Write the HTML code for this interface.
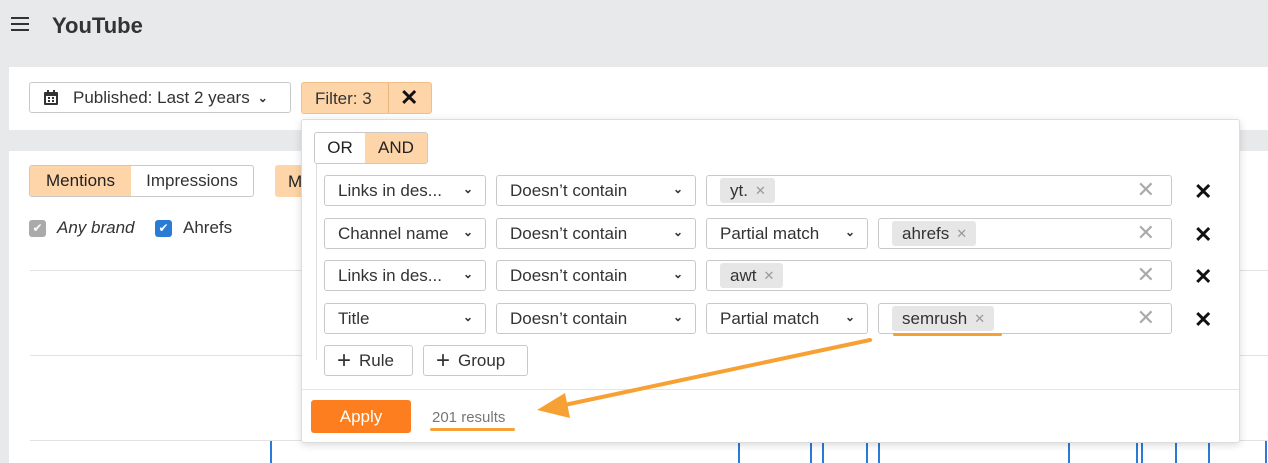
<!DOCTYPE html>
<html><head><style>
*{box-sizing:border-box;margin:0;padding:0}
body{width:1268px;height:463px;overflow:hidden;background:#e8e9eb;font-family:"Liberation Sans",sans-serif;color:#222;position:relative;font-size:17px}
.a{position:absolute}
.box{position:absolute;border:1px solid #c9c9c9;border-radius:3px;background:#fff;height:31px;display:flex;align-items:center;padding-left:13px;font-size:17px;color:#333;padding-top:1px}
.chev{position:absolute;right:12px;top:6px;font-size:12px;color:#333;font-weight:bold}
.tag{position:absolute;background:#e6e6e6;border-radius:3px;height:25px;padding:0 9px 0 10px;display:flex;align-items:center;font-size:17px;color:#333;top:2px}
.tag span{color:#999;font-size:13px;margin-left:7px}
.clr{position:absolute;right:16px;top:1px;color:#aaa;font-size:22px;font-weight:300}
.x{position:absolute;font-size:22px;color:#111;font-weight:bold}
.grid{position:absolute;left:30px;right:0;height:1px;background:#e2e2e2}
.bar{position:absolute;width:2px;top:441px;height:22px;background:#2a7bd5}
</style></head><body>
<div class="a" style="left:11px;top:17px;width:18px;height:14px;border-top:2px solid #333;border-bottom:2px solid #333"><div style="margin-top:4px;height:2px;background:#333"></div></div>
<div class="a" style="left:52px;top:13px;font-size:22px;font-weight:bold;color:#333">YouTube</div>
<div class="a" style="left:9px;top:67px;width:1259px;height:63px;background:#fff"></div>
<div class="box" style="left:29px;top:82px;width:262px;padding-left:43px">Published: Last 2 years <span style="font-size:12px;margin-left:8px;font-weight:bold">⌄</span></div>
<svg class="a" style="left:43px;top:90px" width="16" height="16" viewBox="0 0 16 16"><rect x="1" y="2" width="14" height="13" rx="1" fill="#333"/><rect x="3" y="6" width="10" height="7" fill="#fff"/><g fill="#333"><rect x="5" y="7" width="2" height="2"/><rect x="9" y="7" width="2" height="2"/><rect x="5" y="10" width="2" height="2"/><rect x="9" y="10" width="2" height="2"/></g><rect x="4" y="0" width="2" height="3" fill="#333"/><rect x="10" y="0" width="2" height="3" fill="#333"/></svg>
<div class="a" style="left:301px;top:82px;width:131px;height:32px;background:#fdd5a8;border:1px solid #f2bf88;border-radius:3px"></div>
<div class="a" style="left:315px;top:89px;font-size:17px;color:#333">Filter: 3</div>
<div class="a" style="left:388px;top:83px;width:1px;height:30px;background:#e8b57f"></div>
<div class="x" style="left:400px;top:85px">✕</div>
<div class="a" style="left:9px;top:151px;width:1259px;height:312px;background:#fff"></div>
<div class="a" style="left:29px;top:165px;width:225px;height:32px;border:1px solid #c9c9c9;border-radius:3px;overflow:hidden;display:flex;font-size:17px"><div style="width:101px;background:#fdd5a8;display:flex;align-items:center;justify-content:center">Mentions</div><div style="flex:1;display:flex;align-items:center;justify-content:center;color:#333">Impressions</div></div>
<div class="a" style="left:275px;top:165px;width:40px;height:32px;background:#fdd5a8;border-radius:3px;padding:7px 13px;font-size:17px">M</div>
<div class="a" style="left:29px;top:220px;width:17px;height:17px;background:#aaa;border-radius:3px;color:#fff;font-size:12px;text-align:center;line-height:17px">✔</div>
<div class="a" style="left:57px;top:218px;font-style:italic;color:#333">Any brand</div>
<div class="a" style="left:155px;top:220px;width:17px;height:17px;background:#2a7bd5;border-radius:3px;color:#fff;font-size:12px;text-align:center;line-height:17px">✔</div>
<div class="a" style="left:183px;top:218px;color:#333">Ahrefs</div>
<div class="grid" style="top:270px"></div><div class="grid" style="top:355px"></div><div class="grid" style="top:440px"></div>
<div class="bar" style="left:270px"></div><div class="bar" style="left:738px"></div><div class="bar" style="left:810px"></div><div class="bar" style="left:822px"></div><div class="bar" style="left:866px"></div><div class="bar" style="left:878px"></div><div class="bar" style="left:1068px"></div><div class="bar" style="left:1136px"></div><div class="bar" style="left:1141px"></div><div class="bar" style="left:1175px"></div><div class="bar" style="left:1208px"></div><div class="bar" style="left:1265px"></div>
<div class="a" style="left:301px;top:119px;width:939px;height:324px;background:#fff;border:1px solid #ddd;border-radius:3px;box-shadow:0 2px 8px rgba(0,0,0,.15)"></div>
<div class="a" style="left:314px;top:132px;width:114px;height:32px;border:1px solid #c9c9c9;border-radius:3px;overflow:hidden;display:flex;font-size:17px"><div style="width:50px;display:flex;align-items:center;justify-content:center">OR</div><div style="flex:1;background:#fdd5a8;display:flex;align-items:center;justify-content:center">AND</div></div>
<div class="a" style="left:316px;top:164px;width:1px;height:196px;background:#ddd"></div>
<div class="box" style="left:324px;top:175px;width:162px">Links in des...<span class="chev">⌄</span></div>
<div class="box" style="left:496px;top:175px;width:200px">Doesn’t contain<span class="chev">⌄</span></div>
<div class="box" style="left:706px;top:175px;width:466px"><div class="tag" style="left:13px">yt.<span>✕</span></div><span class="clr">✕</span></div>
<div class="x" style="left:1194px;top:179px">✕</div>
<div class="box" style="left:324px;top:218px;width:162px">Channel name<span class="chev">⌄</span></div>
<div class="box" style="left:496px;top:218px;width:200px">Doesn’t contain<span class="chev">⌄</span></div>
<div class="box" style="left:706px;top:218px;width:162px">Partial match<span class="chev">⌄</span></div>
<div class="box" style="left:878px;top:218px;width:294px"><div class="tag" style="left:13px">ahrefs<span>✕</span></div><span class="clr">✕</span></div>
<div class="x" style="left:1194px;top:222px">✕</div>
<div class="box" style="left:324px;top:260px;width:162px">Links in des...<span class="chev">⌄</span></div>
<div class="box" style="left:496px;top:260px;width:200px">Doesn’t contain<span class="chev">⌄</span></div>
<div class="box" style="left:706px;top:260px;width:466px"><div class="tag" style="left:13px">awt<span>✕</span></div><span class="clr">✕</span></div>
<div class="x" style="left:1194px;top:264px">✕</div>
<div class="box" style="left:324px;top:303px;width:162px">Title<span class="chev">⌄</span></div>
<div class="box" style="left:496px;top:303px;width:200px">Doesn’t contain<span class="chev">⌄</span></div>
<div class="box" style="left:706px;top:303px;width:162px">Partial match<span class="chev">⌄</span></div>
<div class="box" style="left:878px;top:303px;width:294px"><div class="tag" style="left:13px">semrush<span>✕</span></div><span class="clr">✕</span></div>
<div class="x" style="left:1194px;top:307px">✕</div>
<div class="a" style="left:893px;top:333px;width:109px;height:3px;background:#f7a034;border-radius:2px"></div>
<div class="box" style="left:324px;top:345px;width:89px;padding-left:12px"><span style="font-size:24px;margin-right:8px;line-height:1">+</span>Rule</div>
<div class="box" style="left:423px;top:345px;width:105px;padding-left:12px"><span style="font-size:24px;margin-right:8px;line-height:1">+</span>Group</div>
<div class="a" style="left:302px;top:389px;width:937px;height:1px;background:#e5e5e5"></div>
<div class="a" style="left:311px;top:400px;width:100px;height:33px;background:#fd7e1e;border-radius:3px;color:#fff;text-align:center;line-height:33px;font-size:17px">Apply</div>
<div class="a" style="left:432px;top:409px;font-size:15px;color:#777">201 results</div>
<div class="a" style="left:430px;top:428px;width:85px;height:3px;background:#f7a034;border-radius:2px"></div>
<svg class="a" style="left:0;top:0" width="1268" height="463"><line x1="870" y1="340" x2="555" y2="407" stroke="#f7a034" stroke-width="4" stroke-linecap="round"/><polygon points="537,410 565,393 570,418" fill="#f7a034"/></svg>
</body></html>
